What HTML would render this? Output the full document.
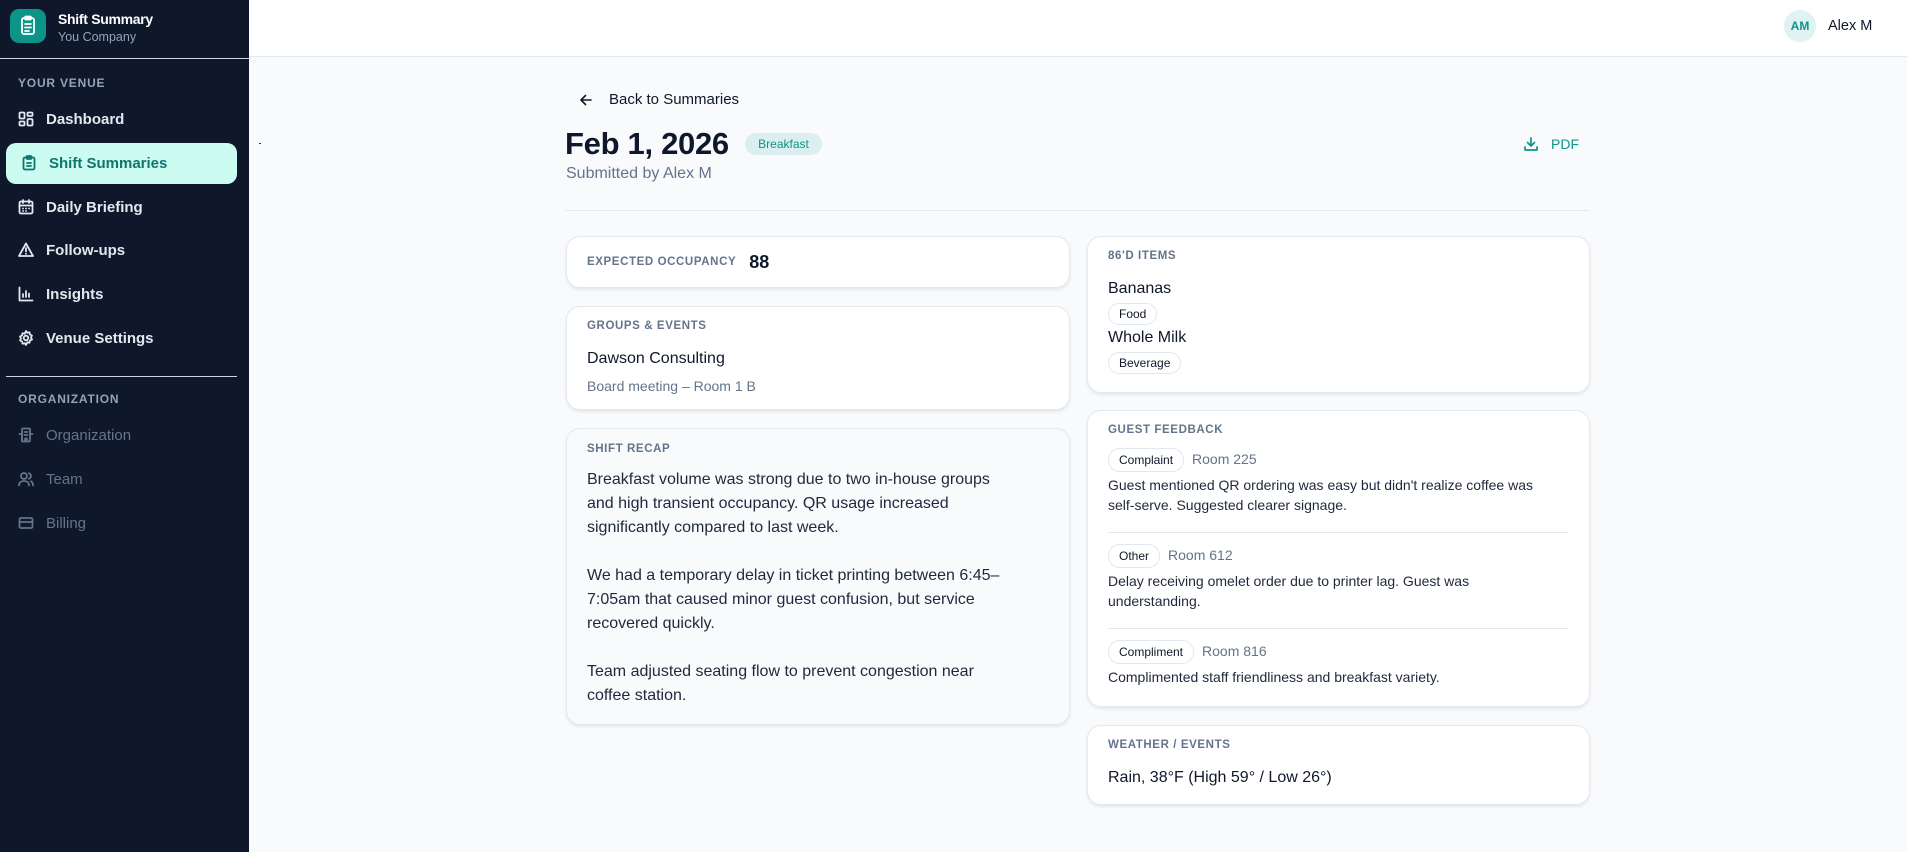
<!DOCTYPE html>
<html><head><meta charset="utf-8"><style>
*{box-sizing:border-box;margin:0;padding:0}
body{width:1907px;height:852px;overflow:hidden;font-family:"Liberation Sans",sans-serif;background:#f8fafc;color:#0f172a;position:relative}
.sb{position:absolute;left:0;top:0;width:249px;height:852px;background:#0f172a}
.logo{position:absolute;left:10px;top:9px;width:36px;height:34px;background:#0d9488;border-radius:9px}
.t1{position:absolute;left:58px;top:11px;color:#fff;font-weight:bold;font-size:14px;letter-spacing:-0.3px}
.t2{position:absolute;left:58px;top:30px;color:#94a3b8;font-size:12.5px}
.hr{position:absolute;left:0;width:249px;height:1px;background:#cbd5e1}
.sec{position:absolute;left:18px;font-size:12px;color:#94a3b8;letter-spacing:0.8px;font-weight:bold}
.nav{position:absolute;left:18px;font-size:15px;font-weight:bold;color:#e2e8f0;display:flex;align-items:center;height:20px}
.nav svg{width:16px;height:16px;margin-right:12px;fill:none;stroke:currentColor;stroke-width:1.8;stroke-linecap:round;stroke-linejoin:round}
.dim{color:#64748b;font-weight:normal}
.active{position:absolute;left:6px;top:143px;width:231px;height:41px;background:#ccfbf1;border-radius:10px}
.top{position:absolute;left:249px;top:0;right:0;height:57px;background:#fff;border-bottom:1px solid #e2e8f0}
.card{position:absolute;background:#fff;border:1px solid #e2e8f0;border-radius:14px;box-shadow:0 2px 3px rgba(15,23,42,.08);padding:0 20px}
.lab{font-size:11.5px;font-weight:bold;color:#64748b;letter-spacing:0.6px}
.pill{display:inline-block;border:1px solid #e2e8f0;border-radius:12px;font-size:12px;height:24px;line-height:22px;padding:0 10px;color:#0f172a;background:#fff}
.fb{font-size:14px;line-height:20px;color:#1e293b}
.room{font-size:14px;color:#64748b;margin-left:8px}
</style></head><body>
<div class="sb">
 <div class="logo"><svg width="36" height="34" viewBox="0 0 36 34" fill="none" stroke="#fff" stroke-width="1.8" stroke-linecap="round"><rect x="12" y="9" width="12" height="16" rx="2"/><rect x="15" y="7.5" width="6" height="3" rx="1"/><path d="M15 15h6M15 18.5h6M15 22h4"/></svg></div>
 <div class="t1">Shift Summary</div><div class="t2">You Company</div>
 <div class="hr" style="top:58px"></div>
 <div class="sec" style="top:76px">YOUR VENUE</div>
 <div class="nav" style="top:109px"><svg viewBox="0 0 16 16"><rect x="1.5" y="1.5" width="5" height="6" rx="1"/><rect x="9.5" y="1.5" width="5" height="3.5" rx="1"/><rect x="1.5" y="10.5" width="5" height="4" rx="1"/><rect x="9.5" y="8" width="5" height="6.5" rx="1"/></svg>Dashboard</div>
 <div class="active"></div>
 <div class="nav" style="top:153px;left:21px;color:#0f766e"><svg viewBox="0 0 16 16"><rect x="2.5" y="2.5" width="11" height="12" rx="1.5"/><rect x="5.5" y="1" width="5" height="3" rx="1"/><path d="M6 8h4M6 11h4"/></svg>Shift Summaries</div>
 <div class="nav" style="top:197px"><svg viewBox="0 0 16 16"><rect x="1.5" y="2.5" width="13" height="12" rx="1.5"/><path d="M1.5 6.5h13M5 1v3M11 1v3M5 9.5h.1M8 9.5h.1M11 9.5h.1M5 12h.1M8 12h.1"/></svg>Daily Briefing</div>
 <div class="nav" style="top:240px"><svg viewBox="0 0 16 16"><path d="M8 1.5L15 14H1z"/><path d="M8 6v3.5M8 11.8v.1"/></svg>Follow-ups</div>
 <div class="nav" style="top:284px"><svg viewBox="0 0 16 16"><path d="M1.5 1.5v13h13M5 11V8M8 11V5M11 11V7.5"/></svg>Insights</div>
 <div class="nav" style="top:328px"><svg viewBox="0 0 16 16"><circle cx="8" cy="8" r="2.3"/><path d="M8 1l1.3 1.8 2.2-.5.4 2.2 2 1-.9 2 1 2-2.1 1-.4 2.2-2.2-.5L8 15l-1.3-1.8-2.2.5-.4-2.2-2-1 .9-2-1-2 2-1 .5-2.2 2.2.5z"/></svg>Venue Settings</div>
 <div class="hr" style="top:376px;left:6px;width:231px"></div>
 <div class="sec" style="top:392px">ORGANIZATION</div>
 <div class="nav dim" style="top:425px"><svg viewBox="0 0 16 16"><rect x="4" y="1.5" width="8" height="13" rx="1"/><path d="M1.5 7h2.5v7.5M14.5 7H12M6.5 5h3M6.5 8h3M7 14.5v-3h2v3"/></svg>Organization</div>
 <div class="nav dim" style="top:469px"><svg viewBox="0 0 16 16"><circle cx="6" cy="5" r="3"/><path d="M1 14.5c0-3 2.2-4.5 5-4.5s5 1.5 5 4.5M11 2.2a3 3 0 010 5.6M13 10.3c1.3.7 2 2 2 4.2"/></svg>Team</div>
 <div class="nav dim" style="top:513px"><svg viewBox="0 0 16 16"><rect x="1.5" y="3" width="13" height="10" rx="1.5"/><path d="M1.5 7h13"/></svg>Billing</div>
</div>
<div class="top">
 <div style="position:absolute;left:1535px;top:10px;width:32px;height:32px;border-radius:50%;background:#e0f2f1;color:#0d9488;font-weight:bold;font-size:12px;text-align:center;line-height:32px">AM</div>
 <div style="position:absolute;left:1579px;top:18px;font-size:14.5px;color:#0f172a">Alex M</div>
</div>
<div style="position:absolute;left:259px;top:143px;width:2px;height:1px;background:#333"></div>
<svg style="position:absolute;left:578px;top:92px" width="16" height="16" viewBox="0 0 16 16" fill="none" stroke="#0f172a" stroke-width="1.6" stroke-linecap="round" stroke-linejoin="round"><path d="M13 8H3M7.5 3.5L3 8l4.5 4.5"/></svg>
<div style="position:absolute;left:609px;top:91px;font-size:15px;color:#0f172a">Back to Summaries</div>
<div style="position:absolute;left:565px;top:126px;font-size:31px;font-weight:bold;letter-spacing:-0.3px">Feb 1, 2026</div>
<div style="position:absolute;left:745px;top:133px;width:77px;height:22px;border-radius:11px;background:#dbeff0;color:#0d9488;font-size:12px;text-align:center;line-height:22px">Breakfast</div>
<div style="position:absolute;left:566px;top:165px;font-size:16px;color:#64748b">Submitted by Alex M</div>
<svg style="position:absolute;left:1523px;top:136px" width="16" height="16" viewBox="0 0 16 16" fill="none" stroke="#0d9488" stroke-width="1.7" stroke-linecap="round" stroke-linejoin="round"><path d="M8 2v8M4.5 6.5L8 10l3.5-3.5M2 11v3h12v-3"/></svg>
<div style="position:absolute;left:1551px;top:136px;font-size:14px;color:#0d9488">PDF</div>
<div style="position:absolute;left:565px;top:210px;width:1024px;height:1px;background:#e2e8f0"></div>

<div class="card" style="left:566px;top:236px;width:504px;height:52px;display:flex;align-items:center"><span class="lab">EXPECTED OCCUPANCY</span><span style="font-size:18px;margin-left:13px;font-weight:bold;color:#0f172a">88</span></div>
<div class="card" style="left:566px;top:306px;width:504px;height:104px"><div class="lab" style="margin-top:13px">GROUPS &amp; EVENTS</div><div style="font-size:16px;margin-top:18px">Dawson Consulting</div><div style="font-size:14px;color:#64748b;margin-top:10px">Board meeting – Room 1 B</div></div>
<div class="card" style="left:566px;top:428px;width:504px;height:297px;background:#f8fafc"><div class="lab" style="margin-top:14px">SHIFT RECAP</div><div style="font-size:16px;line-height:24px;margin-top:13px;color:#1e293b">Breakfast volume was strong due to two in-house groups<br>and high transient occupancy. QR usage increased<br>significantly compared to last week.<br><br>We had a temporary delay in ticket printing between 6:45–<br>7:05am that caused minor guest confusion, but service<br>recovered quickly.<br><br>Team adjusted seating flow to prevent congestion near<br>coffee station.</div></div>

<div class="card" style="left:1087px;top:236px;width:503px;height:157px"><div class="lab" style="margin-top:13px">86'D ITEMS</div><div style="font-size:16px;margin-top:18px">Bananas</div><div class="pill" style="margin-top:5px;height:22px;line-height:20px">Food</div><div style="font-size:16px;margin-top:4px">Whole Milk</div><div class="pill" style="margin-top:5px;height:22px;line-height:20px">Beverage</div></div>
<div class="card" style="left:1087px;top:410px;width:503px;height:297px"><div class="lab" style="margin-top:13px">GUEST FEEDBACK</div>
 <div style="margin-top:12px"><span class="pill">Complaint</span><span class="room">Room 225</span></div>
 <div class="fb" style="margin-top:3px">Guest mentioned QR ordering was easy but didn't realize coffee was<br>self-serve. Suggested clearer signage.</div>
 <div style="border-top:1px solid #e2e8f0;margin-top:17px;padding-top:11px"><span class="pill">Other</span><span class="room">Room 612</span></div>
 <div class="fb" style="margin-top:3px">Delay receiving omelet order due to printer lag. Guest was<br>understanding.</div>
 <div style="border-top:1px solid #e2e8f0;margin-top:17px;padding-top:11px"><span class="pill">Compliment</span><span class="room">Room 816</span></div>
 <div class="fb" style="margin-top:3px">Complimented staff friendliness and breakfast variety.</div>
</div>
<div class="card" style="left:1087px;top:725px;width:503px;height:80px"><div class="lab" style="margin-top:13px">WEATHER / EVENTS</div><div style="font-size:16px;margin-top:18px">Rain, 38°F (High 59° / Low 26°)</div></div>
</body></html>
